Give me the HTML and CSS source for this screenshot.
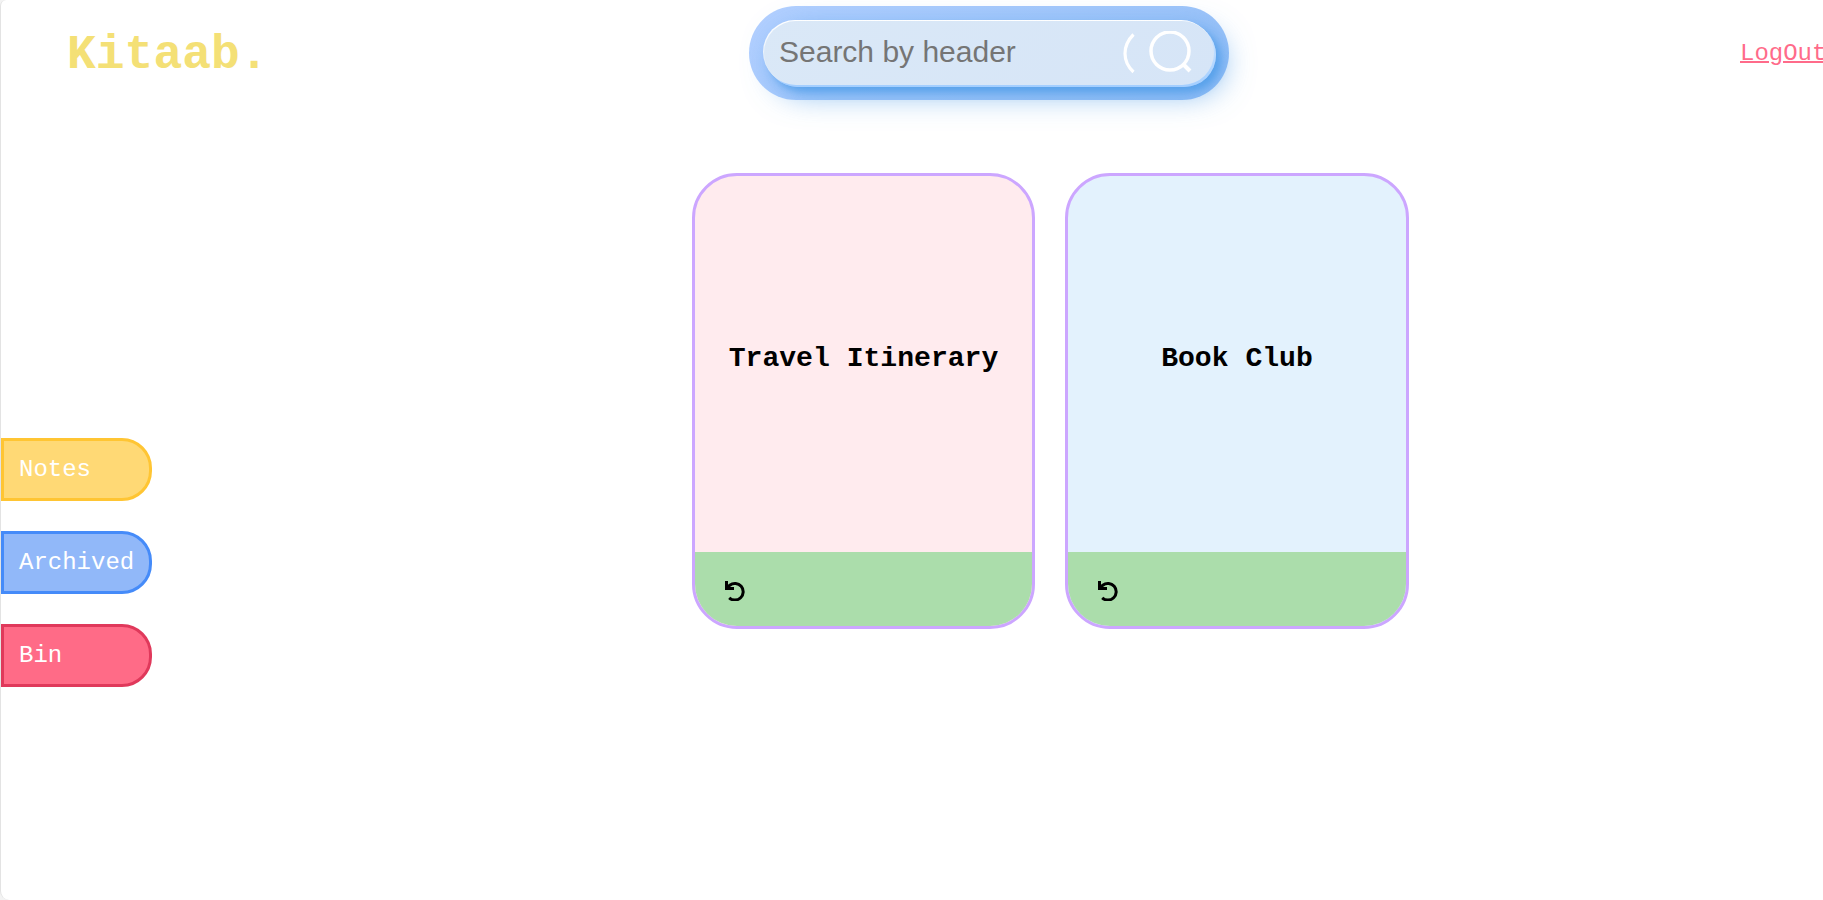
FILE: index.html
```html
<!DOCTYPE html>
<html lang="en">
<head>
<meta charset="utf-8">
<title>Kitaab</title>
<link rel="stylesheet" href="styles.css">
</head>
<body>
<div class="page">
  <header class="header">
    <h1 class="logo">Kitaab.</h1>
    <div class="search">
      <div class="search-inner">
        <input class="search-input" type="text" placeholder="Search by header">
        <svg class="search-icon" viewBox="0 0 70 44" fill="none" stroke="#fff">
          <path d="M10.500 3.500Q2 12 2 22.500T10.500 41" stroke-width="3.200"/>
          <circle cx="47" cy="20" r="19" stroke-width="3.500"/>
          <path d="M60.500 33.500L67 40" stroke-width="4"/>
        </svg>
      </div>
    </div>
    <a class="logout" href="#">LogOut</a>
  </header>
  <div class="body">
    <nav class="tabs">
      <a class="tab tab-notes">Notes</a>
      <a class="tab tab-archived">Archived</a>
      <a class="tab tab-bin">Bin</a>
    </nav>
    <main class="cards">
      <article class="card card-pink">
        <h3 class="card-title">Travel Itinerary</h3>
        <footer class="card-footer">
          <svg class="restore" viewBox="0 0 20 20" fill="none" stroke="#000" stroke-width="3"><path d="M1.500 0V7.500H9M1.500 7.500L4.800 4.200A8.300 8.300 0 1 1 4.200 16.800"/></svg>
        </footer>
      </article>
      <article class="card card-blue">
        <h3 class="card-title">Book Club</h3>
        <footer class="card-footer">
          <svg class="restore" viewBox="0 0 20 20" fill="none" stroke="#000" stroke-width="3"><path d="M1.500 0V7.500H9M1.500 7.500L4.800 4.200A8.300 8.300 0 1 1 4.200 16.800"/></svg>
        </footer>
      </article>
    </main>
  </div>
</div>
</body>
</html>
```
FILE: styles.css
```css
* { box-sizing: border-box; }
html { background: #f3f3f3; overflow: hidden; }
body {
  margin: 0;
  height: 900px;
  overflow: hidden;
  font-family: "Courier New", "Liberation Mono", monospace;
}
.page {
  height: 900px;
  background: #fff;
  border-left: 1px solid #e3e3e3;
  border-radius: 6px 0 0 9px;
  overflow: hidden;
}
.header {
  display: grid;
  grid-template-columns: 682px 480px 1fr;
  padding: 6px 0 0 66px;
  height: 100px;
  align-items: center;
}
.logo { margin: 0; padding-top: 4px; font-size: 48px; line-height: 54px; color: #f4e076; }
.search {
  height: 94px;
  padding: 15px;
  border-radius: 47px;
  background: linear-gradient(135deg, #b3d0ff 0%, #98c1f8 100%);
  position: relative;
  z-index: 0;
}
.search-inner {
  position: relative;
  display: flex;
  align-items: center;
  height: 64px;
  padding: 0 25px 0 15px;
  border-radius: 75px;
  background: linear-gradient(135deg, #dae8f7 0%, #d6e5f7 100%);
}
.search-inner::before,
.search-inner::after {
  content: "";
  position: absolute;
  width: 100%;
  height: 100%;
  border-radius: inherit;
}
.search-inner::before {
  top: -1.5px;
  left: -1.5px;
  background: linear-gradient(0deg, #dae8f7 0%, #fff 100%);
  z-index: -1;
}
.search-inner::after {
  right: -1.5px;
  bottom: -1.5px;
  background: linear-gradient(0deg, #a3ceff 0%, #d3e8ff 100%);
  box-shadow: rgba(79, 156, 232, .7) 4.5px 4.5px 7.5px 0, rgba(79, 156, 232, .7) 7.5px 7.5px 30px 0;
  z-index: -2;
}
.search-input {
  flex: 1;
  min-width: 0;
  padding: 0 0 2px;
  border: 0;
  outline: 0;
  background: transparent;
  font: 30px Arial, "Liberation Sans", sans-serif;
}
.search-input::placeholder { color: #757575; opacity: 1; }
.search-icon { width: 70px; height: 44px; margin-right: -4px; }
.logout {
  justify-self: start;
  margin-left: 511px;
  padding-top: 2px;
  font-size: 24px;
  line-height: 28px;
  color: #ff6b8a;
  text-decoration: underline;
  text-decoration-thickness: 2px;
}
.body { display: flex; }
.tabs {
  display: flex;
  flex-direction: column;
  gap: 30px;
  padding-top: 338px;
  width: 151px;
}
.tab {
  height: 63px;
  padding-left: 15px;
  border: 3px solid;
  border-radius: 0 30px 30px 0;
  font-size: 24px;
  line-height: 57px;
  color: #fff;
}
.tab-notes { background: #ffd975; border-color: #ffc533; }
.tab-archived { background: #91b8f9; border-color: #458bf9; }
.tab-bin { background: #ff6b87; border-color: #e0395b; }
.cards { display: flex; gap: 30px; padding: 73px 0 0 540px; }
.card {
  display: flex;
  flex-direction: column;
  width: 343px;
  height: 456px;
  border: 3px solid #cca6ff;
  border-radius: 45px;
  overflow: hidden;
}
.card-pink { background: #ffebee; }
.card-blue { width: 344px; background: #e3f2fd; }
.card-title {
  display: flex;
  flex: 1;
  align-items: center;
  justify-content: center;
  margin: 0;
  padding-bottom: 10px;
  font-size: 28.080px;
  line-height: 32px;
}
.card-footer {
  display: flex;
  align-items: center;
  height: 74px;
  padding: 4px 0 0 30px;
  background: #abddab;
}
.restore { width: 20px; height: 20px; }
```
